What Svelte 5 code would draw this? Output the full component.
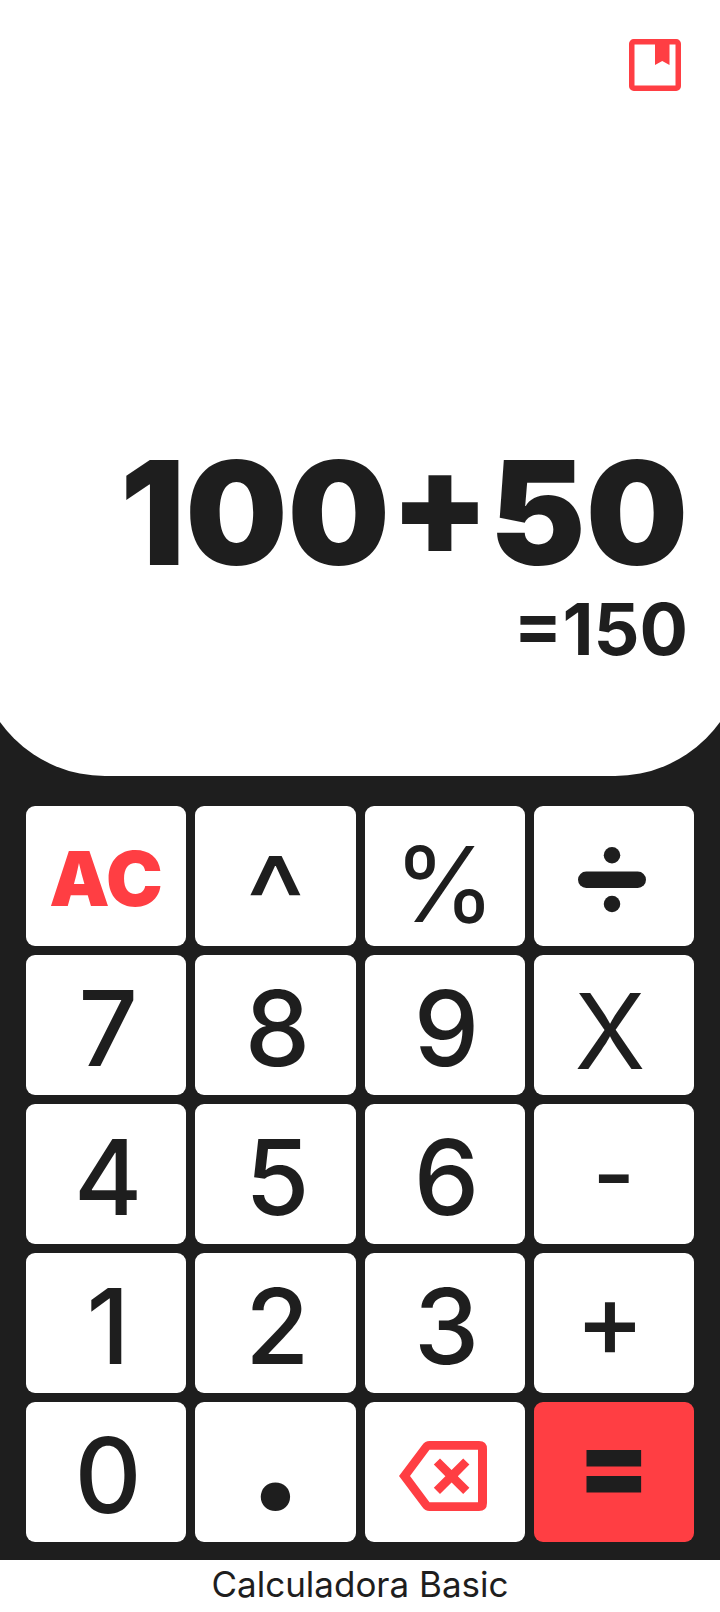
<script>
  let expression = $state('100+50');
  let result = $state('=150');

  const keys = [
    { label: 'AC', kind: 'clear' },
    { label: '^', kind: 'power' },
    { label: '%', kind: 'percent' },
    { label: '÷', kind: 'icon', icon: 'divide', name: 'Dividir' },
    { label: '7', kind: 'digit' },
    { label: '8', kind: 'digit' },
    { label: '9', kind: 'digit' },
    { label: 'X', kind: 'times' },
    { label: '4', kind: 'digit' },
    { label: '5', kind: 'digit' },
    { label: '6', kind: 'digit' },
    { label: '-', kind: 'minus' },
    { label: '1', kind: 'digit' },
    { label: '2', kind: 'digit' },
    { label: '3', kind: 'digit' },
    { label: '+', kind: 'plus' },
    { label: '0', kind: 'digit' },
    { label: '.', kind: 'point' },
    { label: 'DEL', kind: 'icon', icon: 'backspace', name: 'Borrar' },
    { label: '=', kind: 'equals' }
  ];

  function evaluate(text) {
    const source = text.replaceAll('X', '*').replaceAll('÷', '/').replaceAll('^', '**').replaceAll('%', '/100');
    try {
      const value = Function(`return (${source})`)();
      return Number.isFinite(value) ? String(value) : '';
    } catch {
      return '';
    }
  }

  function press(key) {
    if (key.label === 'AC') expression = '';
    else if (key.label === 'DEL') expression = expression.slice(0, -1);
    else if (key.label === '=') expression = evaluate(expression) || expression;
    else expression += key.label;
    const value = evaluate(expression);
    result = value ? `=${value}` : '';
  }
</script>

<div class="app">
  <main class="body">
    <section class="display">
      <button class="history" aria-label="Historial">
        <svg viewBox="0 0 52 52" width="52" height="52" aria-hidden="true">
          <rect x="2.75" y="2.75" width="46.5" height="46.5" rx="2" />
          <path d="M26 3H40.5V26L33.25 22L26 26Z" />
        </svg>
      </button>
      <div class="readout">
        <output class="expression">{expression}</output>
        <output class="result">{result}</output>
      </div>
    </section>

    <section class="keypad">
      {#each keys as key}
        <button class="key {key.kind}" aria-label={key.name} onclick={() => press(key)}>
          {#if key.icon === 'divide'}
            <svg class="divide" viewBox="0 0 68 66" width="68" height="66" aria-hidden="true">
              <rect x="0" y="24.5" width="68" height="16.5" rx="8.25" />
              <circle cx="34" cy="8.25" r="8.25" />
              <circle cx="34" cy="57" r="8.25" />
            </svg>
          {:else if key.icon === 'backspace'}
            <svg class="backspace" viewBox="0 0 88 70" width="88" height="70" aria-hidden="true">
              <path
                fill-rule="evenodd"
                d="M80 0H30.5Q26 0 23.3 4L0 35L23.3 66Q26 70 30.5 70H80Q88 70 88 62V8Q88 0 80 0ZM79 61.3H30.5L11 35L30.5 8.7H79Z"
              />
              <path d="M41 17.4L52.6 29L64.2 17.4L70.4 23.6L58.8 35.2L70.4 46.8L64.2 53L52.6 41.4L41 53L34.8 46.8L46.4 35.2L34.8 23.6Z" />
            </svg>
          {:else}
            {key.label}
          {/if}
        </button>
      {/each}
    </section>
  </main>

  <footer class="footer">Calculadora Basic</footer>
</div>

<style>
  :global(body) {
    background: #fff;
  }

  .app {
    display: flex;
    flex-direction: column;
    min-height: 100vh;
    font-family: Inter, 'Open Sans', sans-serif;
    color: #1e1e1e;
  }

  .body {
    display: flex;
    flex: 1;
    flex-direction: column;
    overflow: hidden;
    background: #1e1e1e;
  }

  button {
    border: 0;
    padding: 0;
    background: none;
    color: inherit;
    font: inherit;
    cursor: pointer;
  }

  svg {
    display: block;
  }

  /* The panel runs past both window edges, so its round corners are cut. */
  .display {
    display: flex;
    flex: 1;
    flex-direction: column;
    justify-content: space-between;
    align-items: flex-end;
    margin: 0 -24px;
    padding: 39px 56px 111px;
    border-radius: 0 0 129px 129px;
    background: #fff;
  }

  .history {
    margin-right: 7px;
  }

  .history rect {
    fill: none;
    stroke: #ff3e43;
    stroke-width: 5.5;
  }

  .history path {
    fill: #ff3e43;
  }

  .readout {
    display: flex;
    flex-direction: column;
    align-items: flex-end;
    gap: 8px;
  }

  .expression {
    font-size: 144px;
    font-weight: 900;
    line-height: 144px;
  }

  .result {
    font-size: 72px;
    font-weight: 700;
    line-height: 72px;
  }

  .keypad {
    display: grid;
    grid-template-columns: repeat(4, 1fr);
    grid-auto-rows: 140px;
    gap: 9px;
    padding: 30px 26px 18px;
  }

  .key {
    display: flex;
    align-items: center;
    justify-content: center;
    border-radius: 9px;
    background: #fff;
    font-size: 104px;
    font-weight: 500;
    line-height: 104px;
  }

  .digit {
    padding: 6px 4px 0 8px;
  }

  .clear {
    padding-top: 4px;
    color: #ff3e43;
    font-size: 76px;
    font-weight: 900;
  }

  .power {
    padding-top: 48px;
    font-size: 128px;
    font-weight: 400;
  }

  .percent {
    padding-top: 16px;
    font-weight: 400;
  }

  .icon {
    padding: 8px 4px 0 0;
  }

  .times {
    padding: 12px 8px 0 0;
    font-weight: 400;
  }

  .minus {
    font-size: 92px;
  }

  .plus {
    padding: 0 8px 8px 0;
  }

  .point {
    padding-bottom: 64px;
    font-family: Lato, sans-serif;
    font-size: 180px;
    font-weight: 900;
  }

  .equals {
    padding-bottom: 16px;
    background: #ff3e43;
    font-size: 104px;
    font-weight: 900;
  }

  .divide {
    fill: #1e1e1e;
  }

  .backspace {
    fill: #ff3e43;
  }

  .footer {
    padding-bottom: 4px;
    background: #fff;
    font-size: 35px;
    line-height: 48px;
    text-align: center;
  }
</style>
